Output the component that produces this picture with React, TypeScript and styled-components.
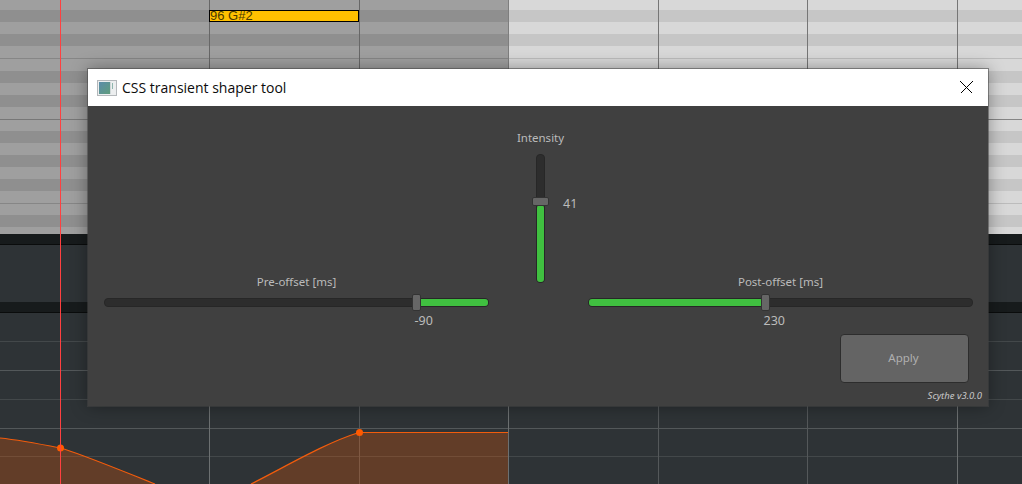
import React from "react";
import styled, { createGlobalStyle } from "styled-components";

const Global = createGlobalStyle`
  html, body { margin: 0; padding: 0; background: #2e3336; }
`;

const Stage = styled.div`
  position: relative;
  width: 1022px;
  height: 484px;
  overflow: hidden;
  background: #2e3336;
  display: flex;
  flex-direction: column;
`;

const Roll = styled.div`
  position: relative;
  height: 234px;
  flex: none;
  overflow: hidden;
  display: flex;
  flex-direction: column;
`;

const Row = styled.div<{ $dark: boolean; $h: number; $line?: string; $lineR?: string }>`
  flex: none;
  box-sizing: border-box;
  height: ${(p) => p.$h}px;
  display: flex;
  background: ${(p) =>
    p.$dark
      ? "linear-gradient(90deg, #8f8f8f 508px, #c6c6c6 508px)"
      : "linear-gradient(90deg, #9f9f9f 508px, #d8d8d8 508px)"};
  position: relative;
  ${(p) =>
    p.$line
      ? `&::after { content: ""; position: absolute; left: 0; right: 0; bottom: 0; height: 1px;
          background: linear-gradient(90deg, ${p.$line} 508px, ${p.$lineR} 508px); }`
      : ""}
`;

const VLine = styled.div<{ $x: number; $c: string }>`
  position: absolute;
  top: 0;
  bottom: 0;
  left: ${(p) => p.$x}px;
  width: 1px;
  background: ${(p) => p.$c};
`;

const Note = styled.div`
  position: absolute;
  left: 209px;
  top: 10px;
  width: 150px;
  height: 12px;
  box-sizing: border-box;
  background: #ffc000;
  border: 1px solid #000;
  font: 13px/10px "Liberation Sans", Arial, sans-serif;
  color: #4a3b02;
  padding-left: 0;
  white-space: nowrap;
`;

const Band = styled.div`
  flex: none;
  box-sizing: border-box;
  height: 11px;
  background: #171b1c;
  border-bottom: 1px solid #0a0c0c;
`;

const Lane = styled.div`
  flex: none;
  height: 57px;
  background: #2e3336;
`;

const Automation = styled.div`
  position: relative;
  flex: 1;
  display: flex;
  flex-direction: column;
  background: #2e3336;
  overflow: hidden;
`;

const AutoRow = styled.div<{ $strong: boolean; $h: number }>`
  flex: none;
  box-sizing: border-box;
  height: ${(p) => p.$h}px;
  border-bottom: 1px solid ${(p) => (p.$strong ? "#53585a" : "#43484a")};
`;

const Envelope = styled.svg`
  position: absolute;
  left: 0;
  top: 0;
  width: 1022px;
  height: 172px;
`;

const Playhead = styled.div`
  position: absolute;
  left: 60px;
  top: 0;
  bottom: 0;
  width: 1px;
  background: #ff4040;
`;

const Win = styled.div`
  position: absolute;
  left: 88px;
  top: 69px;
  width: 900px;
  height: 337px;
  display: flex;
  flex-direction: column;
  box-shadow: 0 0 0 1px rgba(70, 70, 70, 0.55), 0 0 16px rgba(0, 0, 0, 0.38);
`;

const TitleBar = styled.div`
  flex: none;
  height: 37px;
  background: #fff;
  display: flex;
  align-items: center;
  padding: 0 15px 0 9px;
  gap: 5px;
`;

const Title = styled.div`
  flex: 1;
  font: 14px/20px "Open Sans", "Noto Sans", sans-serif;
  color: #0c0c0c;
  white-space: nowrap;
`;

const Body = styled.div`
  flex: 1;
  background: #404040;
  padding-top: 24px;
  display: flex;
  flex-direction: column;
  font-family: "Noto Sans", "Open Sans", sans-serif;
  color: #bbbbbb;
`;

const Controls = styled.div`
  display: grid;
  grid-template-columns: 385px 99px 385px;
  padding-left: 16px;
  height: 199px;
`;

const SideColumn = styled.div`
  align-self: end;
  display: flex;
  flex-direction: column;
`;

const CenterColumn = styled.div`
  display: flex;
  flex-direction: column;
  align-items: center;
  padding-left: 4px;
  gap: 8px;
`;

const Caption = styled.div`
  font-size: 11.5px;
  line-height: 16px;
  text-align: center;
  white-space: nowrap;
`;

const SideCaption = styled(Caption)`
  margin-bottom: 4px;
`;

const HSlot = styled.div`
  position: relative;
  height: 17px;
  display: flex;
  align-items: center;
`;

const Track = styled.div`
  position: relative;
  box-sizing: border-box;
  background: #2d2d2d;
  border: 1px solid #272727;
  border-radius: 4px;
`;

const HTrack = styled(Track)`
  width: 100%;
  height: 9px;
`;

const VTrack = styled(Track)`
  width: 9px;
  height: 129px;
`;

const Fill = styled.div`
  position: absolute;
  background: #40c040;
  border-radius: 3px;
`;

const HFill = styled(Fill)`
  top: 0;
  bottom: 0;
`;

const VFill = styled(Fill)`
  left: 0;
  right: 0;
  bottom: 0;
`;

const Thumb = styled.div`
  position: absolute;
  box-sizing: border-box;
  background: #666666;
  border: 1px solid #333333;
  border-radius: 2px;
`;

const HThumb = styled(Thumb)`
  top: 0;
  width: 9px;
  height: 17px;
  margin-left: -4.5px;
`;

const VThumb = styled(Thumb)`
  left: -5px;
  width: 17px;
  height: 9px;
`;

const SideValue = styled.div`
  font-size: 12.5px;
  line-height: 16px;
  margin-top: 2px;
  width: fit-content;
  transform: translateX(-2px);
`;

const VValue = styled.div`
  position: absolute;
  left: 26px;
  font-size: 12.5px;
  line-height: 16px;
  white-space: nowrap;
`;

const Footer = styled.div`
  display: flex;
  justify-content: flex-end;
  padding: 5px 19px 0 0;
`;

const ApplyButton = styled.button`
  width: 129px;
  height: 49px;
  box-sizing: border-box;
  background: #646464;
  border: 1px solid #2d2d2d;
  border-radius: 4px;
  color: #b0b0b0;
  font: 11.5px/45px "Noto Sans", "Open Sans", sans-serif;
  padding: 0 2px 2px 0;
`;

const Version = styled.div`
  align-self: flex-end;
  padding: 6px 6px 0 0;
  font-size: 9.5px;
  line-height: 14px;
  font-style: italic;
  color: #c8c8c8;
`;

const LINES_UP: [number, string][] = [
  [209, "#676767"],
  [359, "#676767"],
  [508, "#7e7e7e"],
  [658, "#767676"],
  [807, "#767676"],
  [957, "#767676"],
];

const LINES_DOWN: [number, string][] = [
  [209, "#6c7071"],
  [359, "#54585a"],
  [508, "#6c7071"],
  [658, "#54585a"],
  [807, "#54585a"],
  [957, "#6c7071"],
];

type RowSpec = { dark: boolean; h: number; line?: string; lineR?: string };
const ROWS: RowSpec[] = [
  { dark: false, h: 10 },
  { dark: true, h: 12 },
  { dark: false, h: 12 },
  { dark: true, h: 12 },
  { dark: false, h: 13, line: "#868686", lineR: "#bcbcbc" },
  { dark: false, h: 12 },
  { dark: true, h: 12 },
  { dark: false, h: 12 },
  { dark: true, h: 12 },
  { dark: false, h: 13, line: "#777777", lineR: "#858585" },
  { dark: false, h: 11 },
  { dark: true, h: 12 },
  { dark: false, h: 12 },
  { dark: true, h: 12 },
  { dark: false, h: 12 },
  { dark: true, h: 12 },
  { dark: false, h: 13, line: "#868686", lineR: "#bcbcbc" },
  { dark: false, h: 11 },
  { dark: true, h: 12 },
  { dark: false, h: 8 },
];

const AUTO_ROWS = [
  { h: 29, strong: false },
  { h: 29, strong: true },
  { h: 29, strong: false },
  { h: 29, strong: true },
  { h: 28, strong: false },
];

const WindowIcon = () => (
  <svg width="20" height="16" viewBox="0 0 20 16">
    <defs>
      <linearGradient id="pane" x1="0" y1="0" x2="1" y2="1">
        <stop offset="0" stopColor="#5b8caa" />
        <stop offset="1" stopColor="#5f9c7c" />
      </linearGradient>
    </defs>
    <rect x="0.5" y="0.5" width="19" height="15" fill="#eceeef" stroke="#b4b8bb" />
    <rect x="2" y="2" width="11" height="12" fill="url(#pane)" />
    <rect x="15" y="3" width="1" height="6" fill="#8fb6ae" />
    <rect x="13" y="2" width="1" height="12" fill="#cfd8d8" />
  </svg>
);

const CloseIcon = () => (
  <svg width="13" height="13" viewBox="0 0 13 13" shapeRendering="crispEdges">
    <path d="M0.5 0.5 L12.5 12.5 M12.5 0.5 L0.5 12.5" stroke="#000" strokeWidth="1" fill="none" />
  </svg>
);

export default function App() {
  const prePos = 81.17;
  const postPos = 46.1;
  const intensityTop = 42;
  return (
    <Stage>
      <Global />
      <Roll>
        {ROWS.map((r, i) => (
          <Row key={i} $dark={r.dark} $h={r.h} $line={r.line} $lineR={r.lineR} />
        ))}
        {LINES_UP.map(([x, c]) => (
          <VLine key={x} $x={x} $c={c} />
        ))}
        <Note>96 G#2</Note>
      </Roll>
      <Band />
      <Lane />
      <Band />
      <Automation>
        {AUTO_ROWS.map((r, i) => (
          <AutoRow key={i} $h={r.h} $strong={r.strong} />
        ))}
        {LINES_DOWN.map(([x, c]) => (
          <VLine key={x} $x={x} $c={c} />
        ))}
        <Envelope viewBox="0 0 1022 172">
          <path
            d="M0 125 C20 127 40 131 60 135 C75 138.5 115 155 155 171 L155 172 L251 172 L251 171 C285 154 325 130 359 119.5 L508 119.5 L508 172 L0 172 Z"
            fill="rgba(255,90,0,0.25)"
          />
          <path
            d="M0 125 C20 127 40 131 60 135 C75 138.5 115 155 155 171 M251 171 C285 154 325 130 359 119.5 L508 119.5"
            fill="none"
            stroke="#f25c0c"
            strokeWidth="1.2"
          />
          <circle cx="60.5" cy="135" r="3.5" fill="#ff5a00" />
          <circle cx="359.5" cy="119.5" r="3.5" fill="#ff5a00" />
        </Envelope>
      </Automation>
      <Playhead />
      <Win>
        <TitleBar>
          <WindowIcon />
          <Title>CSS transient shaper tool</Title>
          <CloseIcon />
        </TitleBar>
        <Body>
          <Controls>
            <SideColumn>
              <SideCaption>Pre-offset [ms]</SideCaption>
              <HSlot>
                <HTrack>
                  <HFill style={{ left: `${prePos}%`, right: 0 }} />
                </HTrack>
                <HThumb style={{ left: `${prePos}%` }} />
              </HSlot>
              <SideValue style={{ marginLeft: `${prePos}%` }}>-90</SideValue>
            </SideColumn>
            <CenterColumn>
              <Caption>Intensity</Caption>
              <VTrack>
                <VFill style={{ top: intensityTop + 8 }} />
                <VThumb style={{ top: intensityTop }} />
                <VValue style={{ top: intensityTop - 1 }}>41</VValue>
              </VTrack>
            </CenterColumn>
            <SideColumn>
              <SideCaption>Post-offset [ms]</SideCaption>
              <HSlot>
                <HTrack>
                  <HFill style={{ left: 0, width: `${postPos}%` }} />
                </HTrack>
                <HThumb style={{ left: `${postPos}%` }} />
              </HSlot>
              <SideValue style={{ marginLeft: `${postPos}%` }}>230</SideValue>
            </SideColumn>
          </Controls>
          <Footer>
            <ApplyButton>Apply</ApplyButton>
          </Footer>
          <Version>Scythe v3.0.0</Version>
        </Body>
      </Win>
    </Stage>
  );
}
